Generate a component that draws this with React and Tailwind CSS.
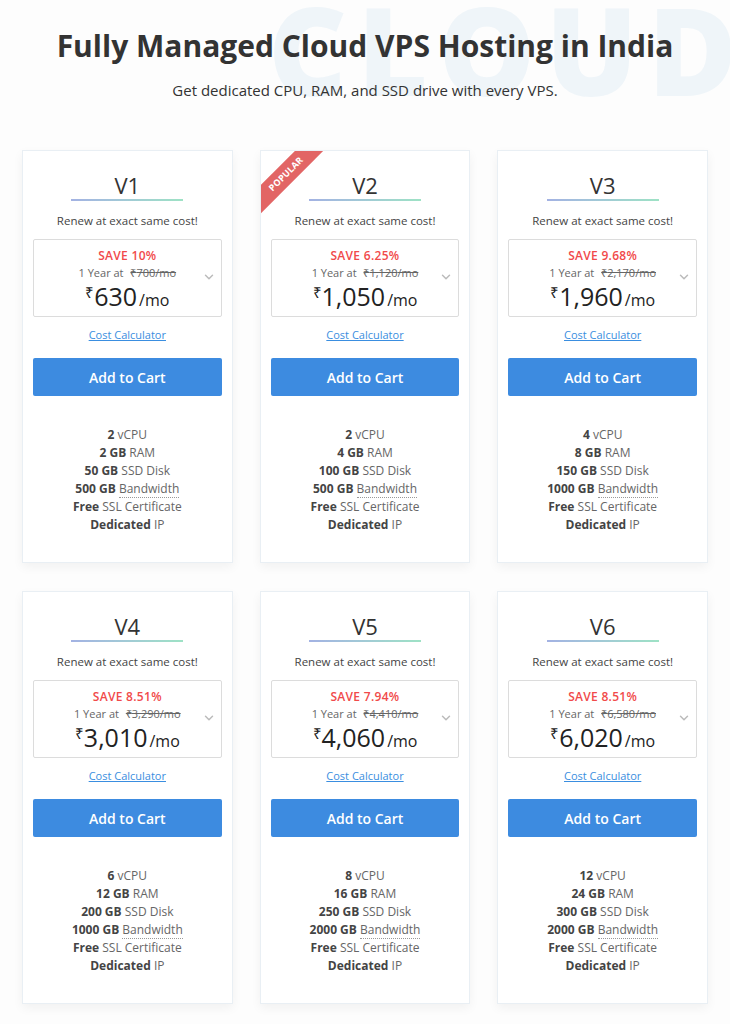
import { ChevronDown } from 'lucide-react'

const plans = [
  { name: 'V1', save: '10%', was: '700', price: '630', cpu: '2', ram: '2 GB', disk: '50 GB', bw: '500 GB' },
  { name: 'V2', save: '6.25%', was: '1,120', price: '1,050', cpu: '2', ram: '4 GB', disk: '100 GB', bw: '500 GB', popular: true },
  { name: 'V3', save: '9.68%', was: '2,170', price: '1,960', cpu: '4', ram: '8 GB', disk: '150 GB', bw: '1000 GB' },
  { name: 'V4', save: '8.51%', was: '3,290', price: '3,010', cpu: '6', ram: '12 GB', disk: '200 GB', bw: '1000 GB' },
  { name: 'V5', save: '7.94%', was: '4,410', price: '4,060', cpu: '8', ram: '16 GB', disk: '250 GB', bw: '2000 GB' },
  { name: 'V6', save: '8.51%', was: '6,580', price: '6,020', cpu: '12', ram: '24 GB', disk: '300 GB', bw: '2000 GB' },
]

const Feature = ({ value, label, dotted }) => (
  <div className="h-[18px] leading-[18px]">
    <span className="font-bold text-[#444]">{value}</span>{' '}
    <span className={dotted ? 'text-[#666] border-b border-dotted border-[#999]' : 'text-[#666]'}>{label}</span>
  </div>
)

const PlanCard = ({ plan }) => (
  <div className="relative h-[413px] bg-white border border-[#e9eff4] shadow-[0_4px_10px_rgba(0,0,0,0.05)] overflow-hidden">
    {plan.popular && (
      <div className="absolute -left-[30px] top-[13px] w-[110px] h-[20px] bg-[#e26565] -rotate-45 text-white text-[9px] font-bold tracking-wide flex items-center justify-center">
        POPULAR
      </div>
    )}
    <div className="flex flex-col items-center pt-[20px]">
      <div className="text-[22px] leading-[28px] font-medium text-[#333]">{plan.name}</div>
      <div className="w-[112px] h-[2px] bg-gradient-to-r from-[#a3b2e3] to-[#9ee2c5]" />
      <div className="mt-[12px] text-[11.5px] leading-[16px] text-[#444]">Renew at exact same cost!</div>
    </div>
    <div className="mx-[10px] mt-[10px] h-[78px] border border-[#dcdcdc] rounded-[2px] relative flex flex-col items-center pt-[8px]">
      <div className="text-[12px] leading-[16px] font-semibold text-[#f14a4a] tracking-wide">SAVE {plan.save}</div>
      <div className="text-[11px] leading-[14px] mt-[2px] text-[#666]">
        1 Year at <span className="line-through ml-1">₹{plan.was}/mo</span>
      </div>
      <div className="flex items-end leading-none mt-[4px] text-[#222]">
        <span className="text-[15px] self-start mt-[1px]">₹</span>
        <span className="text-[25px]">{plan.price}</span>
        <span className="text-[16px] ml-[2px] mb-[1px]">/mo</span>
      </div>
      <ChevronDown className="absolute right-[5px] top-[30px] w-[14px] h-[14px] text-[#bbb]" strokeWidth={2.5} />
    </div>
    <div className="text-center mt-[8px] leading-[16px]">
      <span className="text-[11px] text-[#3a8ee0] underline">Cost Calculator</span>
    </div>
    <button className="block mx-[10px] mt-[15px] w-[calc(100%-20px)] h-[38px] bg-[#3d8be0] rounded-[2px] text-white text-[14px] font-semibold">
      Add to Cart
    </button>
    <div className="mt-[30px] text-center text-[12px]">
      <Feature value={plan.cpu} label="vCPU" />
      <Feature value={plan.ram} label="RAM" />
      <Feature value={plan.disk} label="SSD Disk" />
      <Feature value={plan.bw} label="Bandwidth" dotted />
      <Feature value="Free" label="SSL Certificate" />
      <Feature value="Dedicated" label="IP" />
    </div>
  </div>
)

export default function App() {
  return (
    <div className="relative min-h-[1024px] bg-[#fdfdfd] overflow-hidden" style={{ fontFamily: '"Open Sans", sans-serif' }}>
      <div className="absolute left-[268px] -top-[12px] text-[122px] font-extrabold text-[#eff5f9] leading-none tracking-[10px] select-none whitespace-nowrap">
        CLOUD
      </div>
      <div className="relative">
        <h1 className="pt-[27px] text-center text-[30px] leading-[38px] font-bold text-[#333]">
          Fully Managed Cloud VPS Hosting in India
        </h1>
        <p className="mt-[14px] text-center text-[15px] leading-[22px] text-[#333]">
          Get dedicated CPU, RAM, and SSD drive with every VPS.
        </p>
        <div className="grid grid-cols-3 gap-x-[27px] gap-y-[28px] px-[22px] mt-[49px]">
          {plans.map((p) => (
            <PlanCard key={p.name} plan={p} />
          ))}
        </div>
      </div>
    </div>
  )
}
